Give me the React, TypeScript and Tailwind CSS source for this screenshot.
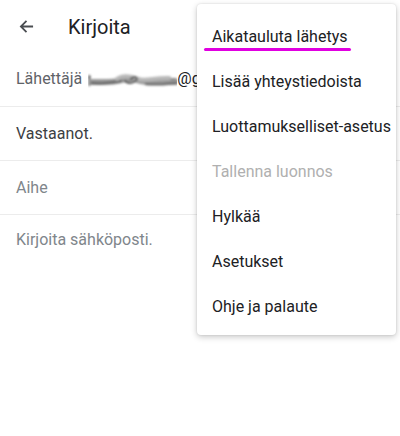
import React from "react";

const items = [
  { label: "Aikatauluta lähetys", disabled: false },
  { label: "Lisää yhteystiedoista", disabled: false },
  { label: "Luottamukselliset-asetus", disabled: false },
  { label: "Tallenna luonnos", disabled: true },
  { label: "Hylkää", disabled: false },
  { label: "Asetukset", disabled: false },
  { label: "Ohje ja palaute", disabled: false },
];

function Blur() {
  return (
    <svg width="89" height="24" viewBox="0 0 92 24" preserveAspectRatio="none" className="shrink-0">
      <defs>
        <filter id="b" x="-10%" y="-50%" width="120%" height="200%">
          <feGaussianBlur stdDeviation="1" />
        </filter>
      </defs>
      <g filter="url(#b)" fill="none" strokeLinecap="round">
        <path d="M1.5 9 L1.5 18" stroke="#444" strokeWidth="2" />
        <path d="M3 15 C 15 15, 25 16, 35 13 C 42 11, 48 12, 55 14 C 65 16, 75 14, 91 15" stroke="#9a9a9a" strokeWidth="6" />
        <path d="M4 16 C 15 17, 25 16, 34 14" stroke="#666" strokeWidth="2.5" />
        <path d="M30 12 C 36 8, 44 9, 52 12 C 60 15, 70 10, 84 11" stroke="#b8b8b8" strokeWidth="4" />
        <path d="M38 14 C 42 17, 46 17, 50 13 C 52 10, 48 9, 44 12" stroke="#444" strokeWidth="1.6" />
        <path d="M60 17 C 70 18, 80 17, 91 16" stroke="#6d6d6d" strokeWidth="2.5" />
        <path d="M86 12 L91 12" stroke="#777" strokeWidth="1.5" />
      </g>
    </svg>
  );
}

export default function App() {
  return (
    <div
      className="relative w-[400px] h-[436px] bg-white overflow-hidden"
      style={{ fontFamily: "Roboto, 'Noto Sans', sans-serif" }}
    >
      <div className="flex items-center h-[53px] pl-[19px]">
        <svg width="15" height="15" viewBox="0 0 16 16" className="shrink-0">
          <path d="M15 8 H2.2 M8 2 L2 8 L8 14" stroke="#4a4d51" strokeWidth="1.9" fill="none" />
        </svg>
        <span className="ml-[34px] text-[20px] leading-[28px] text-[#202124]">Kirjoita</span>
      </div>
      <div className="h-[54px] pl-[16px] pt-[14px] border-b border-[#ececec]">
        <div className="flex items-center whitespace-nowrap">
          <span className="text-[16px] leading-[24px] text-[#5f6368]">Lähettäjä</span>
          <span className="ml-[6px] flex items-center">
            <Blur />
            <span className="text-[16px] leading-[24px] text-[#202124]">@g</span>
          </span>
        </div>
      </div>
      <div className="h-[54px] pl-[16px] pt-[15px] border-b border-[#ececec]">
        <div className="text-[16px] leading-[24px] text-[#3c4043]">Vastaanot.</div>
      </div>
      <div className="h-[54px] pl-[16px] pt-[15px] border-b border-[#ececec]">
        <div className="text-[16px] leading-[24px] text-[#80868b]">Aihe</div>
      </div>
      <div className="pl-[16px] pt-[13px]">
        <div className="text-[16px] leading-[24px] text-[#80868b]">Kirjoita sähköposti.</div>
      </div>

      <div className="absolute left-[197px] top-[4px] w-[199px] pt-[10px] pb-[6px] bg-white rounded-[4px] shadow-[0_2px_6px_rgba(0,0,0,0.22),0_0_2px_rgba(0,0,0,0.12)]">
        {items.map((it, i) => (
          <div key={i} className="relative flex items-center h-[45px] pl-[15px]">
            <span className={`text-[16px] ${it.disabled ? "text-[#b0b0b0]" : "text-[#202124]"}`}>{it.label}</span>
            {i === 0 && (
              <div className="absolute left-[7px] top-[34px] w-[147px] h-[3px] rounded-full bg-[#e000e0]" />
            )}
          </div>
        ))}
      </div>
    </div>
  );
}
